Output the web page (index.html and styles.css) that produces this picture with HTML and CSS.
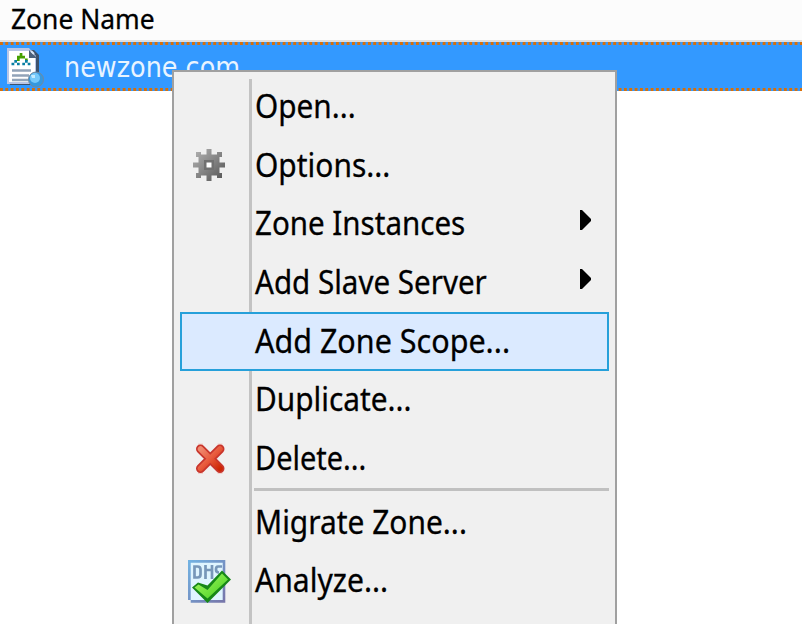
FILE: index.html
```
<!DOCTYPE html>
<html lang="en">
<head>
<meta charset="utf-8">
<title>Zones</title>
<link rel="stylesheet" href="styles.css">
</head>
<body>
<div class="list">
  <div class="list-header"><span class="t-head">Zone Name</span></div>
  <div class="list-row">
    <svg class="row-line" width="802" height="3"><path d="M0 1.500H802" stroke="#d8700a" stroke-width="3" stroke-dasharray="2.870 2.463"/></svg>
    <div class="row-body">
      <svg class="zone-icon" width="38" height="42" viewBox="0 0 38 42">
        <path d="M24 4h4l5 5v4h-3v26H4v-2h18z" fill="#3d526d"/>
        <path d="M27 10l6 3v26H4v-2h23z" fill="#3d526d"/>
        <path d="M1 2h22l7 8v28H1z" fill="#b9c6e6"/>
        <path d="M3 5h20v7h6v24H3z" fill="#fff"/>
        <path d="M23 4l8 8h-8z" fill="#4c607b"/>
        <path d="M25 5l3 3" stroke="#dce6f5" stroke-width="2"/>
        <path d="M13.700 7h2.700v2.700H19v2.700h2.700V15H19v-2.600h-5.300V15H11v-2.600h-2.700V12.400H11V9.700h2.700z" fill="#45a000"/>
        <path d="M8.300 14H11v2.700h2.700v2.600H11v-2.600H8.300v2.600H5.500v-2.600h2.800zM19 14h2.700v2.700h2.700v2.600h-2.700v-2.600H19v2.600h-2.700v-2.600H19z" fill="#087fa4"/>
        <path d="M6 24.500h19M6 29.500h17M6 34h17" stroke="#91a3b8" stroke-width="2.3"/>
        <circle cx="30" cy="33.500" r="7.500" fill="#3598df" stroke="#72899e"/>
        <circle cx="29" cy="32" r="5" fill="#76c9fb"/>
        <path d="M25 29h4v3h-3z" fill="#c3ebff"/>
      </svg>
      <span class="t-zone">newzone.com</span>
    </div>
    <svg class="row-line" width="802" height="3"><path d="M0 1.500H802" stroke="#d8700a" stroke-width="3" stroke-dasharray="2.870 2.463"/></svg>
  </div>
</div>
<div class="menu">
  <div class="item"><span class="icon"></span><span class="label open">Open...</span></div>
  <div class="item"><span class="icon">
    <svg width="32" height="32" viewBox="0 0 32 32">
      <defs><linearGradient id="g" x1="0" y1="0" x2="1" y2="1"><stop offset="0" stop-color="#b4b4b4"/><stop offset=".5" stop-color="#858585"/><stop offset="1" stop-color="#505050"/></linearGradient></defs>
      <path d="M13.500 0h5v5.500h5.500V3h5v5h-2.500v5.500h5.500v5h-5.500V24h2.500v5h-5v-2.500h-5.500V32h-5v-5.500H8V29H3v-5h2.500v-5.500H0v-5h5.500V8H3V3h5v2.500h5.500z" fill="url(#g)"/>
      <path d="M11 11h10v10H11z" fill="#707070"/><path d="M13.500 13.500h5v5h-5z" fill="#fff"/>
    </svg></span><span class="label options">Options...</span></div>
  <div class="item"><span class="icon"></span><span class="label instances">Zone Instances</span><svg class="arrow" width="12" height="20"><path d="M0 0h2l9 9v2l-9 9H0z"/></svg></div>
  <div class="item"><span class="icon"></span><span class="label slave">Add Slave Server</span><svg class="arrow" width="12" height="20"><path d="M0 0h2l9 9v2l-9 9H0z"/></svg></div>
  <div class="item selected"><span class="icon"></span><span class="label scope">Add Zone Scope...</span></div>
  <div class="item"><span class="icon"></span><span class="label duplicate">Duplicate...</span></div>
  <div class="item"><span class="icon">
    <svg width="32" height="32" viewBox="0 0 32 32">
      <defs><linearGradient id="r" x1="0" y1="0" x2="1" y2="1"><stop offset="0" stop-color="#f08a70"/><stop offset=".5" stop-color="#e85a3c"/><stop offset="1" stop-color="#cd2604"/></linearGradient></defs>
      <path d="M5 1.500h5v3H5zM24.500 1.500h5v3h-5zM5 29h5v3H5zM24.500 29h5v3h-5z" fill="#f0d0cc"/>
      <path d="M7.500 7l19.500 19.500M27 7L7.500 26.500" stroke="#c8352c" stroke-width="9" stroke-linecap="round"/>
      <path d="M7.500 7l19.500 19.500M27 7L7.500 26.500" stroke="url(#r)" stroke-width="5.500" stroke-linecap="round"/>
    </svg></span><span class="label delete">Delete...</span></div>
  <div class="separator"></div>
  <div class="item"><span class="icon"></span><span class="label migrate">Migrate Zone...</span></div>
  <div class="item"><span class="icon">
    <svg class="dns" width="43" height="43" viewBox="0 0 43 43">
      <defs><linearGradient id="b" x1="0" y1="0" x2="1" y2="1"><stop offset="0" stop-color="#72b4e4"/><stop offset="1" stop-color="#7774a8"/></linearGradient>
      <linearGradient id="k" x1="0" y1="0" x2="1" y2="1"><stop offset="0" stop-color="#a8fa62"/><stop offset="1" stop-color="#43ce20"/></linearGradient></defs>
      <path d="M0 0h37.300v42.700H2.700V40H0z" fill="url(#b)"/><path d="M2.700 2.700h32v37.300h-32z" fill="#dff5ff"/>
      <path d="M6.500 6.500h3q3 0 3 3v5q0 3-3 3h-3zM17.500 5v14M24 5v14M17.500 10h6.500M34 6.500h-4q-2 0-2 3t3 3" fill="none" stroke="#7797b9" stroke-width="2.700"/>
      <path d="M4 27.500l6-5 9.500 3L34 10.500l9 9L19.500 43z" fill="#168817"/>
      <path d="M6.500 27.500l4-3 9 5.500L34 13.500l6 6-20.500 19z" fill="url(#k)"/>
    </svg></span><span class="label analyze">Analyze...</span></div>
</div>
</body>
</html>
```
FILE: styles.css
```
body { margin: 0; width: 802px; height: 624px; overflow: hidden; background: #fff; color: #000; font-family: "Noto Sans", sans-serif; }
svg { display: block; flex: none; }
.list-header { height: 40px; display: flex; align-items: center; padding-left: 11px; background: #fcfcfc; border-bottom: 2px solid #e0e0e0; box-sizing: content-box; }
.t-head, .t-zone, .label { white-space: nowrap; transform-origin: left center; }
.t-head { font-size: 28px; line-height: 40px; margin-top: -5px; transform: scaleX(.943); -webkit-text-stroke: .3px #000; }
.list-row { height: 49px; background: #3399ff; display: flex; flex-direction: column; justify-content: space-between; }
.row-body { height: 43px; display: flex; align-items: center; padding-left: 6px; }
.t-zone { margin-left: 20px; margin-top: 2px; font-family: "DejaVu Sans Condensed", "DejaVu Sans", sans-serif; font-size: 28px; line-height: 43px; color: #e9f4ff; transform: scaleX(1.012); }
.menu { position: absolute; left: 172px; top: 70px; width: 445px; height: 570px; box-sizing: border-box; padding: 5.300px 6px; border: 2px solid #a0a0a0; background: linear-gradient(#c3c3c3, #c3c3c3) 75px 7px / 3px 100% no-repeat #f0f0f0; }
.item { height: 58.670px; box-sizing: border-box; display: flex; align-items: center; padding-right: 17px; }
.icon { width: 58px; flex: none; display: flex; justify-content: center; margin-top: -1px; }
.dns { margin-top: 2px; }
.label { flex: none; font-size: 32px; line-height: 58px; margin-left: 17px; margin-top: -1px; -webkit-text-stroke: .3px #000; }
.arrow { margin-left: auto; margin-top: -7px; }
.selected { background: #dbeaff; border: 2.500px solid #26a0da; padding-right: 16px; }
.selected .icon { width: 56px; }
.separator { height: 3px; margin: .500px 0 1.500px 74px; background: #c0c0c0; }
.open { transform: scaleX(.93); }
.options { transform: scaleX(.935); }
.instances { transform: scaleX(.923); }
.slave { transform: scaleX(.924); }
.scope { transform: scaleX(.953); }
.duplicate { transform: scaleX(.932); }
.delete { transform: scaleX(.905); }
.migrate { transform: scaleX(.935); }
.analyze { transform: scaleX(.94); }
```
